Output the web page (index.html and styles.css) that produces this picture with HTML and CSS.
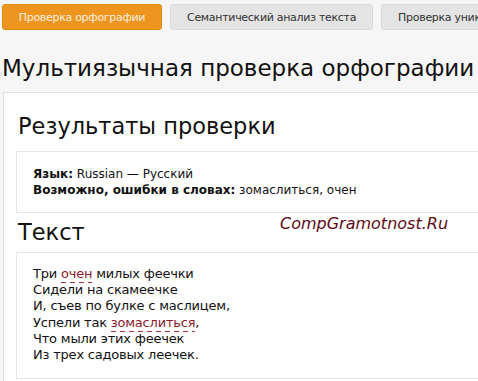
FILE: index.html
```html
<!DOCTYPE html>
<html lang="ru">

<head>
    <meta charset="UTF-8">
    <title>Мультиязычная проверка орфографии</title>
    <link rel="stylesheet" href="styles.css">
</head>

<body>

    <div class="tabs">
        <a class="tab active" href="#">Проверка орфографии</a>
        <a class="tab" href="#">Семантический анализ текста</a>
        <a class="tab" href="#">Проверка уникальности</a>
    </div>

    <h1>Мультиязычная проверка орфографии</h1>

    <div class="panel">
        <h2>Результаты проверки</h2>
        <div class="box info">
            <strong>Язык:</strong> Russian — Русский<br>
            <strong>Возможно, ошибки в словах:</strong> зомаслиться, очен
        </div>

        <h2 class="text-title">Текст</h2>
        <div class="box poem">
            Три <span class="err">очен</span> милых феечки<br>
            Сидели на скамеечке<br>
            И, съев по булке с маслицем,<br>
            Успели так <span class="err">зомаслиться</span>,<br>
            Что мыли этих феечек<br>
            Из трех садовых леечек.
        </div>

        <div class="mark">CompGramotnost.Ru</div>
    </div>

</body>

</html>
```

FILE: styles.css
```css
html,
body {
    overflow: hidden;
}

body {
    margin: 0;
    font-family: "DejaVu Sans", Verdana, sans-serif;
    color: #111;
    background-color: #f6f6f6;
}

.tabs {
    display: flex;
    gap: 8px;
    padding: 4px 0 0 2px;
    white-space: nowrap;
}

.tab {
    display: block;
    flex: none;
    height: 26px;
    line-height: 26px;
    padding: 0 16px;
    font-size: 11px;
    letter-spacing: -0.3px;
    color: #333;
    text-decoration: none;
    background: #e4e4e4;
    border: 1px solid #dadada;
    border-radius: 3px;
    box-sizing: border-box;
}

.tab.active {
    width: 160px;
    text-align: center;
    padding: 0;
    color: #fbeede;
    background: #ee9520;
    border-color: #e38a14;
}

h1 {
    margin: 24px 0 0 2px;
    font-size: 23px;
    font-weight: normal;
    line-height: 28px;
    white-space: nowrap;
}

.panel {
    position: relative;
    margin: 10px -20px 0 3px;
    padding: 16px 0 0 12px;
    height: 300px;
    background: #fff;
    border: 1px solid #e2e2e2;
}

h2 {
    margin: 0 0 8px 2px;
    font-size: 22.5px;
    font-weight: normal;
    line-height: 34px;
}

h2.text-title {
    margin-bottom: 3px;
}

.box {
    border: 1px solid #e6e6e6;
    background: #fff;
    font-size: 12px;
    line-height: 16px;
    padding: 14px 16px;
}

.info {
    margin-bottom: 2px;
}

.poem {
    font-size: 13px;
    letter-spacing: -0.2px;
    line-height: 16.2px;
    padding: 13px 16px 15px;
}

.err {
    color: #8a1a2a;
    padding-bottom: 2px;
    background: repeating-linear-gradient(to right, #a8323e 0 5px, transparent 5px 9px) left bottom / 100% 1px no-repeat;
}

.mark {
    position: absolute;
    left: 276px;
    top: 121px;
    font-size: 16px;
    font-style: italic;
    color: #5e0a18;
}
```
